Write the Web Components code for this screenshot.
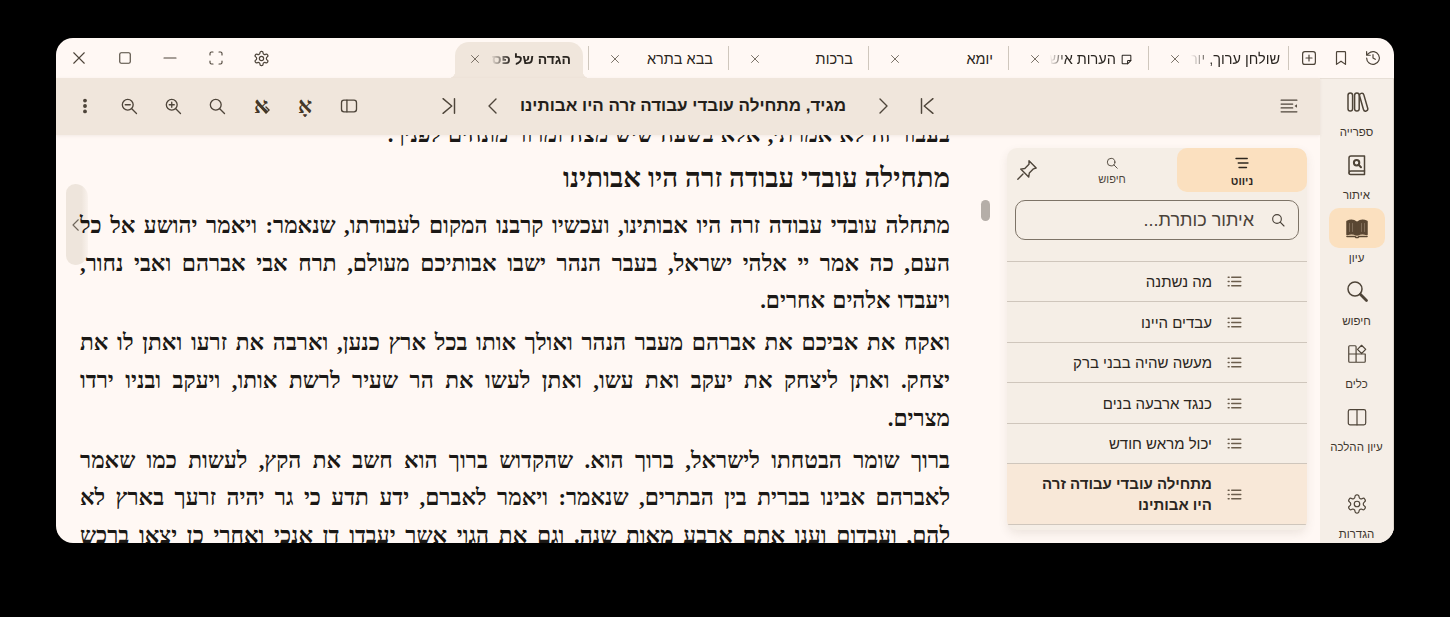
<!DOCTYPE html>
<html lang="he" dir="rtl">
<head>
<meta charset="utf-8">
<title>הגדה של פסח</title>
<style>
  html, body { margin: 0; height: 100%; overflow: hidden; background: #000; }
  body { padding: 38px 56px 74px; box-sizing: border-box; font-family: "Liberation Sans", sans-serif; }
</style>
</head>
<body>
<app-window>
  <tab-strip slot="tabs">
    <tab-item tight>שולחן ערוך, יור</tab-item>
    <tab-item note>הערות איש</tab-item>
    <tab-item>יומא</tab-item>
    <tab-item>ברכות</tab-item>
    <tab-item>בבא בתרא</tab-item>
    <tab-item active>הגדה של פסח</tab-item>
  </tab-strip>
  <reader-toolbar slot="toolbar">מגיד, מתחילה עובדי עבודה זרה היו אבותינו</reader-toolbar>
  <nav-rail slot="rail">
    <rail-item icon="library">ספרייה</rail-item>
    <rail-item icon="findbook">איתור</rail-item>
    <rail-item icon="openbook" active>עיון</rail-item>
    <rail-item icon="bigsearch">חיפוש</rail-item>
    <rail-item icon="apps">כלים</rail-item>
    <rail-item icon="columns">עיון ההלכה</rail-item>
    <rail-item icon="gear" slot="bottom">הגדרות</rail-item>
  </nav-rail>
  <toc-panel slot="panel">
    <toc-item>מה נשתנה</toc-item>
    <toc-item>עבדים היינו</toc-item>
    <toc-item>מעשה שהיה בבני ברק</toc-item>
    <toc-item>כנגד ארבעה בנים</toc-item>
    <toc-item>יכול מראש חודש</toc-item>
    <toc-item active>מתחילה עובדי עבודה זרה היו אבותינו</toc-item>
  </toc-panel>
  <reader-pane>
    <p>בעבור זה לא אמרתי, אלא בשעה שיש מצה ומרור מונחים לפניך.</p>
    <h2>מתחילה עובדי עבודה זרה היו אבותינו</h2>
    <p>מתחלה עובדי עבודה זרה היו אבותינו, ועכשיו קרבנו המקום לעבודתו, שנאמר: ויאמר יהושע אל כל העם, כה אמר יי אלהי ישראל, בעבר הנהר ישבו אבותיכם מעולם, תרח אבי אברהם ואבי נחור, ויעבדו אלהים אחרים.</p>
    <p>ואקח את אביכם את אברהם מעבר הנהר ואולך אותו בכל ארץ כנען, וארבה את זרעו ואתן לו את יצחק. ואתן ליצחק את יעקב ואת עשו, ואתן לעשו את הר שעיר לרשת אותו, ויעקב ובניו ירדו מצרים.</p>
    <p>ברוך שומר הבטחתו לישראל, ברוך הוא. שהקדוש ברוך הוא חשב את הקץ, לעשות כמו שאמר לאברהם אבינו בברית בין הבתרים, שנאמר: ויאמר לאברם, ידע תדע כי גר יהיה זרעך בארץ לא להם, ועבדום וענו אתם ארבע מאות שנה. וגם את הגוי אשר יעבדו דן אנכי ואחרי כן יצאו ברכש גדול.</p>
  </reader-pane>
</app-window>

<script>
const ICONS = {
  close: '<path d="M5 5l14 14M19 5L5 19"/>',
  max: '<rect x="5" y="5" width="14" height="14" rx="2"/>',
  min: '<path d="M4 12h16"/>',
  full: '<path d="M8 4H6a2 2 0 0 0-2 2v2M16 4h2a2 2 0 0 1 2 2v2M8 20H6a2 2 0 0 1-2-2v-2M16 20h2a2 2 0 0 0 2-2v-2"/>',
  gear: '<path d="M12.22 2h-.44a2 2 0 0 0-2 2v.18a2 2 0 0 1-1 1.73l-.43.25a2 2 0 0 1-2 0l-.15-.08a2 2 0 0 0-2.73.73l-.22.38a2 2 0 0 0 .73 2.73l.15.1a2 2 0 0 1 1 1.72v.51a2 2 0 0 1-1 1.74l-.15.09a2 2 0 0 0-.73 2.73l.22.38a2 2 0 0 0 2.73.73l.15-.08a2 2 0 0 1 2 0l.43.25a2 2 0 0 1 1 1.73V20a2 2 0 0 0 2 2h.44a2 2 0 0 0 2-2v-.18a2 2 0 0 1 1-1.73l.43-.25a2 2 0 0 1 2 0l.15.08a2 2 0 0 0 2.73-.73l.22-.39a2 2 0 0 0-.73-2.73l-.15-.08a2 2 0 0 1-1-1.74v-.5a2 2 0 0 1 1-1.74l.15-.09a2 2 0 0 0 .73-2.73l-.22-.38a2 2 0 0 0-2.73-.73l-.15.08a2 2 0 0 1-2 0l-.43-.25a2 2 0 0 1-1-1.73V4a2 2 0 0 0-2-2z"/><circle cx="12" cy="12" r="3"/>',
  history: '<path d="M3.5 12a8.5 8.5 0 1 0 2.7-6.2L3.5 8.3M3.5 3.5v4.8h4.8M12 7.5V12l3 1.8"/>',
  bookmark: '<path d="M7 3.5h10a1 1 0 0 1 1 1v16l-6-4.2-6 4.2v-16a1 1 0 0 1 1-1z"/>',
  add: '<rect x="3.5" y="3.5" width="17" height="17" rx="3"/><path d="M12 8v8M8 12h8"/>',
  note: '<path d="M5 4h14a1 1 0 0 1 1 1v9l-6 6H5a1 1 0 0 1-1-1V5a1 1 0 0 1 1-1z"/><path d="M14 20v-5a1 1 0 0 1 1-1h5"/>',
  outline: '<path d="M2.5 5h19M2.5 9.7h14M2.5 14.3h14M2.5 19h19"/><path d="M21.5 10l-2.8 2 2.8 2z" fill="currentColor" stroke="none"/>',
  navlines: '<path d="M4 6h15M7 12h13M8 18h10"/>',
  panel: '<rect x="3" y="5" width="18" height="14" rx="3"/><path d="M9.5 5v14"/>',
  first: '<path d="M6 4v16M18.500 4L9 12l9.500 8"/>',
  last: '<path d="M18 4v16M5.500 4L15 12l-9.500 8"/>',
  prev: '<path d="M15 5l-7 7 7 7"/>',
  next: '<path d="M9 5l7 7-7 7"/>',
  search: '<circle cx="10.5" cy="10.5" r="6.5"/><path d="M15.3 15.3L21 21"/>',
  zoomin: '<circle cx="10.5" cy="10.5" r="6.5"/><path d="M15.3 15.3L21 21M10.5 7.5v6M7.5 10.5h6"/>',
  zoomout: '<circle cx="10.5" cy="10.5" r="6.5"/><path d="M15.3 15.3L21 21M7.5 10.5h6"/>',
  dots: '<circle cx="12" cy="5.5" r="1.5" fill="currentColor"/><circle cx="12" cy="12" r="1.5" fill="currentColor"/><circle cx="12" cy="18.5" r="1.5" fill="currentColor"/>',
  pin: '<path d="M14 2.8l7.2 7.2-2.7.8-4.2 4.2-.6 4.1-8-8 4.1-.6 4.2-4.2z"/><path d="M8 16L2.8 21.2"/>',
  list: '<path d="M8 6h13M8 12h13M8 18h13"/><path d="M3 6h1.5M3 12h1.5M3 18h1.5"/>',
  library: '<rect x="3" y="3" width="4.6" height="18" rx="2.3"/><rect x="9.6" y="3" width="4.6" height="18" rx="2.3"/><rect x="16.4" y="3" width="4.4" height="18.4" rx="2.2" transform="rotate(-16 18.6 12)"/>',
  findbook: '<path d="M6 3h13.5v15H6a2 2 0 0 0-2 2V5a2 2 0 0 1 2-2z"/><path d="M4 20a1.5 1.5 0 0 0 1.5 1.5h14V18"/><circle cx="11.6" cy="9.8" r="2.7" stroke-width="2"/><path d="M13.6 11.8l2.4 2.4" stroke-width="2"/>',
  openbook: '<path d="M2 5.500C5 4 9 4.200 11.400 6v13C9 17.500 5 17.500 2 18.500z" fill="currentColor"/><path d="M22 5.500C19 4 15 4.200 12.600 6v13C15 17.500 19 17.500 22 18.500z" fill="currentColor"/><path d="M2 20.500h8l1 1h2l1-1h8" stroke-width="1.600"/><path d="M4.500 7.500v8M7.500 7.500v8M16.500 7.500v8M19.500 7.500v8" stroke="#8a7763" stroke-width=".8"/>',
  bigsearch: '<circle cx="10" cy="10" r="7"/><path d="M15.300 15.300L21.500 21.500" stroke-width="2.800"/>',
  apps: '<path d="M3 4a1 1 0 0 1 1-1h6a1 1 0 0 1 1 1v17H4a1 1 0 0 1-1-1zM3 12h18v8a1 1 0 0 1-1 1h-9"/><path d="M17 2.500l4.500 4.500-4.500 4.500-4.500-4.500z"/>',
  columns: '<rect x="2.500" y="4" width="19" height="16.500" rx="2"/><path d="M12 4v16.500"/>'
};

class UiIcon extends HTMLElement {
  static get observedAttributes() {
    return ["name", "size", "weight"];
  }
  constructor() {
    super();
    this.attachShadow({ mode: "open" });
    this.render();
  }
  attributeChangedCallback() {
    this.render();
  }
  render() {
    const size = this.getAttribute("size") || 20;
    const weight = this.getAttribute("weight") || 1.6;
    this.shadowRoot.innerHTML = `
      <style>
        :host { display: inline-flex; flex: none; color: inherit; }
        svg { display: block; fill: none; stroke: currentColor; stroke-linecap: round; stroke-linejoin: round; }
      </style>
      <svg width="${size}" height="${size}" viewBox="0 0 24 24" stroke-width="${weight}">${ICONS[this.getAttribute("name")] || ""}</svg>`;
  }
}
customElements.define("ui-icon", UiIcon);

class AppWindow extends HTMLElement {
  constructor() {
    super();
    this.attachShadow({ mode: "open" }).innerHTML = `
      <style>
        :host {
          display: flex; flex-direction: column; height: 505px; overflow: hidden;
          border-radius: 17px; background: #fff8f4; color: #1d1a17;
          font-family: "Liberation Sans", sans-serif;
        }
        .below { flex: 1; min-height: 0; display: flex; }
        .main { flex: 1; min-width: 0; display: flex; flex-direction: column; }
        .work { flex: 1; min-height: 0; display: flex; }
      </style>
      <slot name="tabs"></slot>
      <div class="below">
        <slot name="rail"></slot>
        <div class="main">
          <slot name="toolbar"></slot>
          <div class="work">
            <slot name="panel"></slot>
            <slot></slot>
          </div>
        </div>
      </div>`;
  }
}
customElements.define("app-window", AppWindow);

class TabStrip extends HTMLElement {
  constructor() {
    super();
    this.attachShadow({ mode: "open" }).innerHTML = `
      <style>
        :host { display: flex; height: 40px; flex: none; color: #4e453a; }
        .side { display: flex; align-items: center; padding-inline: 5px 4px; border-inline-end: 1px solid #cfc7bd; height: 24px; align-self: center; }
        .side span { width: 32px; height: 32px; display: flex; align-items: center; justify-content: center; }
        .tabs { display: flex; align-self: stretch; }
        .win { margin-right: auto; display: flex; align-items: center; direction: ltr; padding-left: 1px; }
        .win span { width: 44px; height: 40px; display: flex; align-items: center; justify-content: center; margin-right: 1.600px; }
        .win span:last-child { margin-right: 0; }
      </style>
      <div class="side">
        <span><ui-icon name="history" size="18"></ui-icon></span>
        <span><ui-icon name="bookmark" size="18"></ui-icon></span>
        <span><ui-icon name="add" size="18"></ui-icon></span>
      </div>
      <div class="tabs"><slot></slot></div>
      <div class="win">
        <span><ui-icon name="close" size="18" weight="1.500"></ui-icon></span>
        <span><ui-icon name="max" size="18" weight="1.500"></ui-icon></span>
        <span><ui-icon name="min" size="18" weight="1.500"></ui-icon></span>
        <span><ui-icon name="full" size="18" weight="1.500"></ui-icon></span>
        <span><ui-icon name="gear" size="17" weight="1.700"></ui-icon></span>
      </div>`;
  }
}
customElements.define("tab-strip", TabStrip);

class TabItem extends HTMLElement {
  constructor() {
    super();
    const note = this.hasAttribute("note")
      ? '<ui-icon name="note" size="13" weight="1.900"></ui-icon>'
      : "";
    this.attachShadow({ mode: "open" }).innerHTML = `
      <style>
        :host {
          display: flex; align-items: center; position: relative; box-sizing: border-box;
          width: 140px; height: 36px; margin-top: 4px; padding: 0 15px 2px 21px;
          font-size: 14.500px; color: #2a2520; gap: 4px;
        }
        :host([tight]) { padding-right: 8px; }
        :host::after {
          content: ""; position: absolute; left: 0; top: 4px; height: 24px;
          border-left: 1px solid #cfc7bd;
        }
        :host([active]) {
          background: #f0e6dc; border-radius: 14px 14px 0 0; font-weight: bold;
          width: 128px; margin-inline: 5px 7px; padding: 0 12px 2px 14px; font-size: 14px;
        }
        :host([active])::before, :host([active])::after {
          content: ""; position: absolute; bottom: 0; top: auto; width: 7px; height: 7px; border: 0;
        }
        :host([active])::before { right: -7px; background: radial-gradient(circle at 100% 0, transparent 7px, #f0e6dc 7.500px); }
        :host([active])::after { left: -7px; background: radial-gradient(circle at 0 0, transparent 7px, #f0e6dc 7.500px); }
        .label {
          flex: 1; min-width: 0; white-space: nowrap; overflow: hidden;
          -webkit-mask-image: linear-gradient(to left, #000 72%, transparent 96%);
          mask-image: linear-gradient(to left, #000 72%, transparent 96%);
        }
        :host(:not([note]):not([tight]):not([active])) .label { -webkit-mask-image: none; mask-image: none; }
        .x { color: #6b6257; display: flex; margin-inline-start: 2px; }
      </style>
      ${note}
      <div class="label"><slot></slot></div>
      <span class="x"><ui-icon name="close" size="12" weight="1.800"></ui-icon></span>`;
  }
}
customElements.define("tab-item", TabItem);

class ReaderToolbar extends HTMLElement {
  constructor() {
    super();
    this.attachShadow({ mode: "open" }).innerHTML = `
      <style>
        :host {
          display: flex; align-items: center; flex: none; box-sizing: border-box; height: 57px; background: #f0e6dc;
          color: #4e453a; padding: 0 9px 2px 7px; position: relative; z-index: 2;
          box-shadow: 0 1px 3px rgba(90,70,50,.08);
        }
        span { width: 44px; height: 44px; display: flex; align-items: center; justify-content: center; flex: none; }
        .center { display: flex; align-items: center; margin-inline-start: 318px; }
        .title { font-size: 17px; font-weight: bold; color: #241f1a; white-space: nowrap; margin-inline: 15px 5px; }
        .tools { display: flex; margin-right: auto; direction: ltr; }
        b { font: bold 22px "Liberation Serif", serif; line-height: 1; position: relative; color: #443728; }
        .strike { position: absolute; left: 10px; top: 10px; }
      </style>
      <span><ui-icon name="outline" size="20" weight="1.400"></ui-icon></span>
      <div class="center">
        <span><ui-icon name="first" size="22"></ui-icon></span>
        <span><ui-icon name="next" size="24" weight="1.400"></ui-icon></span>
        <div class="title"><slot></slot></div>
        <span><ui-icon name="prev" size="24" weight="1.400"></ui-icon></span>
        <span><ui-icon name="last" size="22"></ui-icon></span>
      </div>
      <div class="tools">
        <span><ui-icon name="dots" size="20"></ui-icon></span>
        <span><ui-icon name="zoomout" size="20"></ui-icon></span>
        <span><ui-icon name="zoomin" size="20"></ui-icon></span>
        <span><ui-icon name="search" size="20"></ui-icon></span>
        <span style="position:relative"><b>א</b><svg class="strike" width="24" height="24" viewBox="0 0 24 24" fill="none" stroke="#443728" stroke-linecap="round"><path d="M9 9l8 9" stroke-width="2.600"/><path d="M17 13l3 3-3 3" stroke-width="1.400"/></svg></span>
        <span><b>אָ</b></span>
        <span><ui-icon name="panel" size="20"></ui-icon></span>
      </div>`;
  }
}
customElements.define("reader-toolbar", ReaderToolbar);

class NavRail extends HTMLElement {
  constructor() {
    super();
    this.attachShadow({ mode: "open" }).innerHTML = `
      <style>
        :host {
          display: flex; flex-direction: column; flex: none; box-sizing: border-box; width: 74px;
          background: #f5eee7; border-inline-start: 1px solid #ddd5cb; border-top: 1px solid #e7dfd6;
          padding-top: 3px;
        }
        .bottom { margin-top: auto; margin-bottom: -4px; }
      </style>
      <slot></slot>
      <div class="bottom"><slot name="bottom"></slot></div>`;
  }
}
customElements.define("nav-rail", NavRail);

class RailItem extends HTMLElement {
  constructor() {
    super();
    const icon = this.getAttribute("icon");
    const big = ["library", "openbook", "bigsearch", "findbook"].includes(icon);
    this.attachShadow({ mode: "open" }).innerHTML = `
      <style>
        :host { display: flex; flex-direction: column; align-items: center; height: 63px; font-size: 11.500px; color: #3f372e; }
        .pill { width: 56px; height: 40px; border-radius: 10px; display: flex; align-items: center; justify-content: center; color: #4e4438; flex: none; }
        :host([active]) .pill { background: #fbe0bf; color: #5a4733; }
        .label { margin-top: 2px; white-space: nowrap; line-height: 16px; }
      </style>
      <div class="pill"><ui-icon name="${icon}" size="${big ? 24 : 22}" weight="${big ? 1.500 : 1.300}"></ui-icon></div>
      <div class="label"><slot></slot></div>`;
  }
}
customElements.define("rail-item", RailItem);

class TocPanel extends HTMLElement {
  constructor() {
    super();
    this.attachShadow({ mode: "open" }).innerHTML = `
      <style>
        :host {
          display: flex; flex-direction: column; flex: none; box-sizing: border-box; width: 300px;
          margin: 13px 13px 13px 0; background: #f5eee6; border-radius: 10px;
          box-shadow: 0 4px 10px rgba(90,70,50,.10); overflow: hidden;
        }
        .head { display: flex; height: 44px; flex: none; color: #4e453a; }
        .tab { width: 130px; display: flex; flex-direction: column; align-items: center; justify-content: center; font-size: 11px; gap: 3px; border-radius: 10px; }
        .tab.on { background: #fbe0bf; font-weight: bold; color: #2e271f; }
        .pin { flex: 1; display: flex; align-items: center; justify-content: center; color: #4e453a; }
        .find {
          display: flex; align-items: center; box-sizing: border-box; height: 40px; margin: 8px 8px 21px;
          border: 1px solid #7d7367; border-radius: 10px; padding-inline: 12px; gap: 16px;
          font-size: 18px; color: #4a4239;
        }
        .list { border-top: 1px solid #cfc6bc; }
      </style>
      <div class="head">
        <div class="tab on"><ui-icon name="navlines" size="18" weight="1.800"></ui-icon><span>ניווט</span></div>
        <div class="tab"><ui-icon name="search" size="14"></ui-icon><span>חיפוש</span></div>
        <div class="pin"><ui-icon name="pin" size="24" weight="1.400"></ui-icon></div>
      </div>
      <div class="find"><ui-icon name="search" size="16" weight="1.700"></ui-icon><span>איתור כותרת...</span></div>
      <div class="list"><slot></slot></div>`;
  }
}
customElements.define("toc-panel", TocPanel);

class TocItem extends HTMLElement {
  constructor() {
    super();
    this.attachShadow({ mode: "open" }).innerHTML = `
      <style>
        :host {
          display: flex; align-items: center; box-sizing: border-box; min-height: 40.450px;
          padding-inline: 64px 30px; gap: 14px; border-bottom: 1px solid #cfc6bc;
          font-size: 15px; line-height: 21px; color: #2a2520;
        }
        :host([active]) { background: #f8e8d8; font-weight: bold; min-height: 60.700px; }
        ui-icon { color: #6b5d4c; }
      </style>
      <ui-icon name="list" size="17" weight="1.800"></ui-icon>
      <div><slot></slot></div>`;
  }
}
customElements.define("toc-item", TocItem);

class ReaderPane extends HTMLElement {
  constructor() {
    super();
    this.attachShadow({ mode: "open" }).innerHTML = `
      <style>
        :host {
          display: block; flex: 1; min-width: 0; position: relative; overflow: hidden; isolation: isolate;
          font-family: "Liberation Serif", serif; color: #1b1815;
        }
        .flow { padding-inline: 57px 24px; margin-top: -19px; }
        ::slotted(p) {
          margin: 0 0 4.500px; font-size: 22.700px; line-height: 37.600px; font-weight: bold;
          text-align: justify; word-spacing: 1.500px;
        }
        ::slotted(h2) { margin: 0 0 9px; font-size: 27.600px; line-height: 40px; font-weight: bold; }
        .thumb { position: absolute; left: 925px; top: 65px; width: 9px; height: 21px; border-radius: 5px; background: #b5aea8; }
        .handle {
          position: absolute; left: 10px; top: 49px; width: 22px; height: 81px; border-radius: 10px 14px 14px 10px;
          background: linear-gradient(to right, #eee5dc 70%, rgba(238,229,220,.3)); color: #6f665b;
          display: flex; align-items: center; justify-content: center; z-index: -1; padding-right: 3px; box-sizing: border-box;
        }
      </style>
      <div class="handle"><ui-icon name="prev" size="18" weight="1.500"></ui-icon></div>
      <div class="flow"><slot></slot></div>
      <div class="thumb"></div>`;
  }
}
customElements.define("reader-pane", ReaderPane);
</script>
</body>
</html>
